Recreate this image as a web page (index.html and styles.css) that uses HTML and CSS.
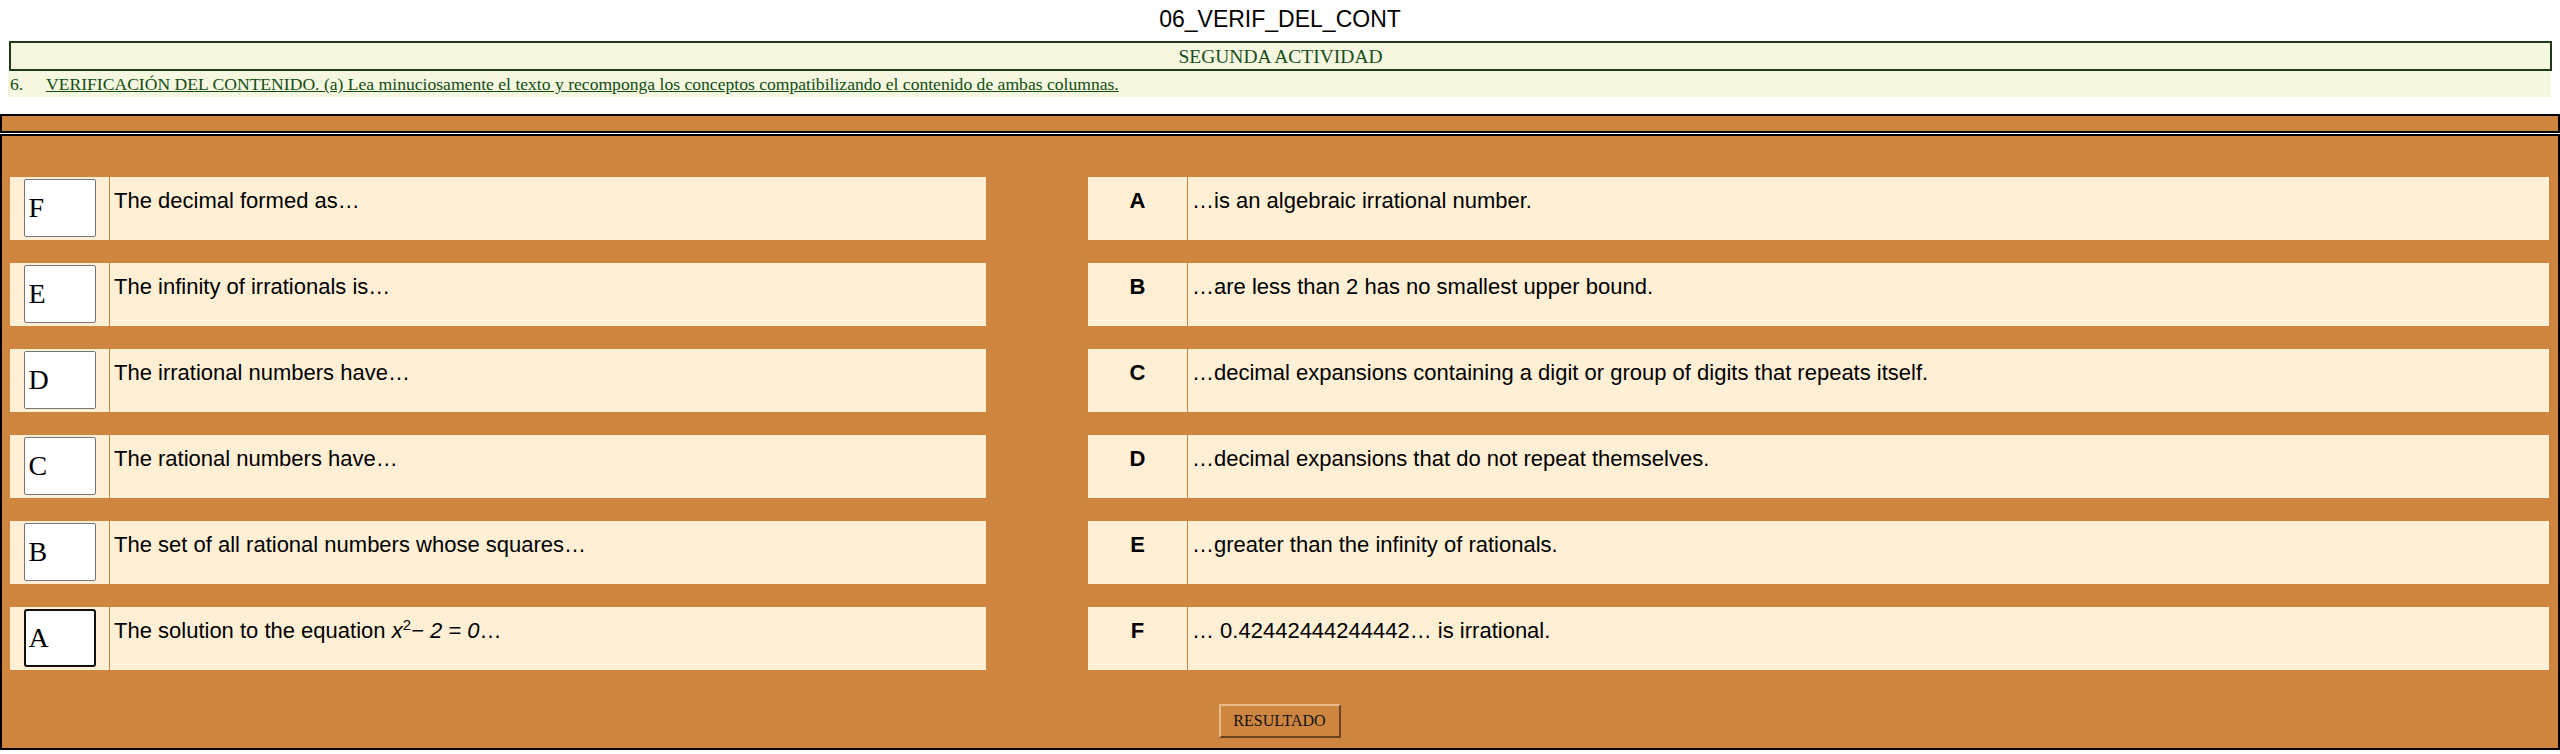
FILE: index.html
```html
<!DOCTYPE html>
<html lang="es">
<head>
<meta charset="utf-8">
<title>06_VERIF_DEL_CONT</title>
<link rel="stylesheet" href="styles.css">
</head>
<body>
<h1 class="title">06_VERIF_DEL_CONT</h1>
<div class="activity">SEGUNDA ACTIVIDAD</div>
<div class="instruction"><span class="num">6.</span><span class="ins-text">VERIFICACIÓN DEL CONTENIDO. (a) Lea minuciosamente el texto y recomponga los conceptos compatibilizando el contenido de ambas columnas.</span></div>
<div class="topbar"></div>
<div class="main">
  <div class="grid">
    <div class="row left"><div class="key"><input class="answer" type="text" value="F"></div><div class="txt">The decimal formed as…</div></div>
    <div class="spacer"></div>
    <div class="row right"><div class="key letter">A</div><div class="txt">…is an algebraic irrational number.</div></div>

    <div class="row left"><div class="key"><input class="answer" type="text" value="E"></div><div class="txt">The infinity of irrationals is…</div></div>
    <div class="spacer"></div>
    <div class="row right"><div class="key letter">B</div><div class="txt">…are less than 2 has no smallest upper bound.</div></div>

    <div class="row left"><div class="key"><input class="answer" type="text" value="D"></div><div class="txt">The irrational numbers have…</div></div>
    <div class="spacer"></div>
    <div class="row right"><div class="key letter">C</div><div class="txt">…decimal expansions containing a digit or group of digits that repeats itself.</div></div>

    <div class="row left"><div class="key"><input class="answer" type="text" value="C"></div><div class="txt">The rational numbers have…</div></div>
    <div class="spacer"></div>
    <div class="row right"><div class="key letter">D</div><div class="txt">…decimal expansions that do not repeat themselves.</div></div>

    <div class="row left"><div class="key"><input class="answer" type="text" value="B"></div><div class="txt">The set of all rational numbers whose squares…</div></div>
    <div class="spacer"></div>
    <div class="row right"><div class="key letter">E</div><div class="txt">…greater than the infinity of rationals.</div></div>

    <div class="row left"><div class="key"><input class="answer focused" type="text" value="A"></div><div class="txt">The solution to the equation <i>x</i><sup>2</sup><i>− 2 = 0</i>…</div></div>
    <div class="spacer"></div>
    <div class="row right"><div class="key letter">F</div><div class="txt">… 0.42442444244442… is irrational.</div></div>
  </div>
  <div class="actions"><button class="btn" type="button">RESULTADO</button></div>
</div>
</body>
</html>
```
FILE: styles.css
```css
html, body {
  margin: 0;
  padding: 0;
  background: #ffffff;
}
body {
  width: 2560px;
  font-family: "Liberation Sans", Arial, sans-serif;
}
.title {
  margin: 0;
  height: 41px;
  line-height: 38px;
  text-align: center;
  font-family: "Liberation Sans", Arial, sans-serif;
  font-weight: normal;
  font-size: 23px;
  color: #000;
}
.activity {
  margin: 0 8px 0 9px;
  height: 26px;
  border: 2px solid #1f3a14;
  background: #f5f7e1;
  text-align: center;
  font-family: "Liberation Serif", "Times New Roman", serif;
  font-size: 19.5px;
  line-height: 27px;
  color: #1b4d1b;
}
.instruction {
  margin: 0 9px 0 8px;
  height: 26px;
  background: #f5f7e1;
  font-family: "Liberation Serif", "Times New Roman", serif;
  font-size: 17.6px;
  line-height: 26px;
  color: #114d11;
  display: flex;
  padding-left: 2px;
}
.instruction .num {
  width: 36px;
}
.instruction .ins-text {
  text-decoration: underline;
}
.topbar {
  margin-top: 17px;
  height: 15px;
  border: 2px solid #000;
  background: #cd853f;
}
.main {
  margin-top: 1px;
  border: 2px solid #000;
  background: #cd853f;
  padding: 41px 9px 0 8px;
  box-sizing: border-box;
  height: 616px;
}
.grid {
  display: grid;
  grid-template-columns: 976px 102px 1fr;
  grid-auto-rows: 63px;
  row-gap: 23px;
}
.row {
  display: flex;
  background: #ffefd5;
}
.key {
  width: 100px;
  flex: none;
  border-right: 1px solid #cd853f;
  box-sizing: border-box;
  display: flex;
  align-items: flex-start;
  justify-content: center;
}
.answer {
  margin: 2px 0 0 0;
  width: 72px;
  height: 58px;
  box-sizing: border-box;
  border: 1px solid #767676;
  border-radius: 2px;
  background: #fff;
  font-family: "Liberation Serif", "Times New Roman", serif;
  font-size: 28px;
  padding: 0 0 0 4px;
  color: #000;
  outline: none;
}
.answer.focused {
  border: 2px solid #101010;
  border-radius: 3px;
  padding-left: 3px;
}
.letter {
  font-weight: bold;
  font-size: 22px;
  padding-top: 11px;
  color: #000;
}
.txt {
  padding: 11px 0 0 4px;
  font-size: 22px;
  color: #000;
  line-height: 25px;
}
.txt sup {
  font-size: 15px;
  line-height: 0;
}
.actions {
  display: flex;
  justify-content: center;
  margin-top: 34px;
}
.btn {
  width: 122px;
  height: 34px;
  background: #cd853f;
  border-style: solid;
  border-width: 2px;
  border-color: #eabb8c #6a4421 #6a4421 #eabb8c;
  font-family: "Liberation Serif", "Times New Roman", serif;
  font-size: 16px;
  color: #111;
  padding: 0;
}
```
